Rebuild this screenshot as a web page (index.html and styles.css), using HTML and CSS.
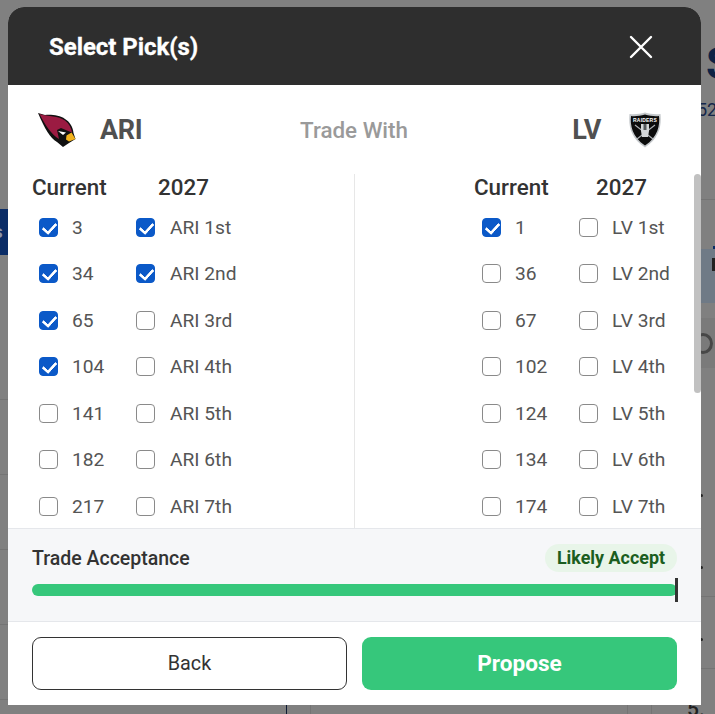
FILE: index.html
```html
<!DOCTYPE html>
<html lang="en">
<head>
<meta charset="utf-8">
<title>Select Pick(s)</title>
<link rel="stylesheet" href="styles.css">
</head>
<body>
<div class="backdrop" aria-hidden="true">
  <div class="bg-blue"><span>s</span></div>
  <i class="hl l1"></i><i class="hl l2"></i><i class="hl l3"></i><i class="hl l4"></i><i class="hl l5"></i>
  <i class="hr r1"></i><i class="hr r2"></i><i class="hr r3"></i>
  <i class="vl v1"></i><i class="vl v2"></i><i class="vl v3"></i><i class="vl v4"></i>
  <span class="bg-s">S</span>
  <span class="bg-52">52</span>
  <i class="bg-row"></i>
  <i class="bg-band"></i>
  <i class="bg-search"></i>
  <i class="bg-tick"></i>
  <i class="bg-glyph"></i>
  <i class="dot d1"></i><i class="dot d2"></i><i class="dot d3"></i>
  <span class="bg-5">5.</span>
</div>

<main class="modal">
  <header class="modal-head">
    <h1>Select Pick(s)</h1>
    <svg class="close" viewBox="0 0 24 24" width="24" height="24"><path d="M2 2 22 22M22 2 2 22" fill="none" stroke="#fff" stroke-width="2.4" stroke-linecap="round"/></svg>
  </header>

  <section class="teams">
    <div class="team">
      <svg class="logo-ari" viewBox="0 0 38 36" width="38" height="36">
        <path d="M0 1 7 3C13 2.500 22 3 27 7 32 10 35 15 35.500 21L37.500 27 31 31 25 35 19 30C12 26 7 17 0 1Z" fill="#111"/>
        <path d="M1.500 2C11 5 20 3.500 27 8.500 31 11.500 33.500 16 34 20.500L29 18.500 23 16 19 18 21 27C14 23 7 13 1.500 2Z" fill="#9b1b42"/>
        <path d="M20 19 28 20.500 25 23Z" fill="#fff"/>
        <path d="M28.500 23.500 33.500 20.500 37.500 27 31 29.500 28 27.500Z" fill="#f2b21c"/>
      </svg>
      <strong>ARI</strong>
    </div>
    <span class="trade-with">Trade With</span>
    <div class="team">
      <strong>LV</strong>
      <svg class="logo-lv" viewBox="0 0 32 36" width="32" height="36">
        <path d="M16 .5C21 2 26 2.500 31.500 2 32.500 13 31 26 16 35.500 1 26-.5 13 .5 2 6 2.500 11 2 16 .5Z" fill="#c4c8cb"/>
        <path d="M16 2.500C21 4 26 4.500 30 4 31 13 29 25 16 33.500 3 25 1 13 2 4 6 4.500 11 4 16 2.500Z" fill="#0c0c0c"/>
        <text x="16" y="9.800" class="logo-text" text-anchor="middle">RAIDERS</text>
        <path d="M6 13 24 27M26 13 8 27" stroke="#a9adb0" stroke-width="1.200" fill="none"/>
        <path d="M12 12H20V19L19 25H13L12 19Z" fill="#d4d6d8"/>
        <path d="M14.500 12H17.500V18H14.500Z" fill="#55595c"/>
      </svg>
    </div>
  </section>

  <section class="picks">
    <div class="side side-left">
      <div class="col">
        <h2>Current</h2>
        <label class="pick"><input type="checkbox" checked><span>3</span></label>
        <label class="pick"><input type="checkbox" checked><span>34</span></label>
        <label class="pick"><input type="checkbox" checked><span>65</span></label>
        <label class="pick"><input type="checkbox" checked><span>104</span></label>
        <label class="pick"><input type="checkbox"><span>141</span></label>
        <label class="pick"><input type="checkbox"><span>182</span></label>
        <label class="pick"><input type="checkbox"><span>217</span></label>
      </div>
      <div class="col">
        <h2>2027</h2>
        <label class="pick"><input type="checkbox" checked><span>ARI 1st</span></label>
        <label class="pick"><input type="checkbox" checked><span>ARI 2nd</span></label>
        <label class="pick"><input type="checkbox"><span>ARI 3rd</span></label>
        <label class="pick"><input type="checkbox"><span>ARI 4th</span></label>
        <label class="pick"><input type="checkbox"><span>ARI 5th</span></label>
        <label class="pick"><input type="checkbox"><span>ARI 6th</span></label>
        <label class="pick"><input type="checkbox"><span>ARI 7th</span></label>
      </div>
    </div>
    <div class="side side-right">
      <div class="col">
        <h2>Current</h2>
        <label class="pick"><input type="checkbox" checked><span>1</span></label>
        <label class="pick"><input type="checkbox"><span>36</span></label>
        <label class="pick"><input type="checkbox"><span>67</span></label>
        <label class="pick"><input type="checkbox"><span>102</span></label>
        <label class="pick"><input type="checkbox"><span>124</span></label>
        <label class="pick"><input type="checkbox"><span>134</span></label>
        <label class="pick"><input type="checkbox"><span>174</span></label>
      </div>
      <div class="col">
        <h2>2027</h2>
        <label class="pick"><input type="checkbox"><span>LV 1st</span></label>
        <label class="pick"><input type="checkbox"><span>LV 2nd</span></label>
        <label class="pick"><input type="checkbox"><span>LV 3rd</span></label>
        <label class="pick"><input type="checkbox"><span>LV 4th</span></label>
        <label class="pick"><input type="checkbox"><span>LV 5th</span></label>
        <label class="pick"><input type="checkbox"><span>LV 6th</span></label>
        <label class="pick"><input type="checkbox"><span>LV 7th</span></label>
      </div>
    </div>
    <div class="thumb"></div>
  </section>

  <section class="acceptance">
    <div class="acc-top">
      <span class="acc-label">Trade Acceptance</span>
      <span class="pill">Likely Accept</span>
    </div>
    <div class="bar"><i class="marker"></i></div>
  </section>

  <footer class="actions">
    <button class="btn btn-back" type="button">Back</button>
    <button class="btn btn-propose" type="button">Propose</button>
  </footer>
</main>
</body>
</html>
```

FILE: styles.css
```css
* { box-sizing: border-box; }
html, body { height: 100%; }
body {
  margin: 0;
  background: #808080;
  overflow: hidden;
  font-family: Roboto, "Liberation Sans", sans-serif;
  position: relative;
}

/* dimmed page behind the dialog */
.backdrop { position: absolute; inset: 0; overflow: hidden; }
.backdrop i, .backdrop span, .backdrop div { position: absolute; display: block; }
.bg-blue { left: 0; top: 209px; width: 8px; height: 46px; background: #0a2c66; }
.bg-blue span { left: -7px; top: 11px; font-size: 19px; font-weight: 700; color: #8a94a8; }
.hl, .hr { height: 1px; background: #747474; }
.hl { left: 0; width: 8px; }
.l1 { top: 399px; } .l2 { top: 474px; } .l3 { top: 549px; } .l4 { top: 624px; } .l5 { top: 699px; }
.hr { left: 701px; width: 14px; }
.r1 { top: 199px; } .r2 { top: 596px; } .r3 { top: 668px; }
.vl { top: 705px; height: 9px; width: 1px; background: #747474; }
.v1 { left: 286px; background: #0d1a33; } .v2 { left: 310px; } .v3 { left: 627px; } .v4 { left: 651px; }
.bg-s { left: 706px; top: 38px; font-size: 44px; font-weight: 700; line-height: 52px; color: #0e2244; }
.bg-52 { left: 697px; top: 99px; font-size: 18px; line-height: 21px; color: #14264a; }
.bg-row { left: 701px; top: 249px; width: 14px; height: 54px; background: #6f7a86; }
.bg-band { left: 701px; top: 318px; width: 14px; height: 50px; background: #7a7a7a; }
.bg-search { left: 693px; top: 333px; width: 20px; height: 21px; border: 3px solid #474747; border-radius: 50%; }
.bg-tick { left: 713px; top: 246px; width: 2px; height: 3px; background: #0a2c66; }
.bg-glyph { left: 712px; top: 258px; width: 3px; height: 13px; background: #222; }
.dot { width: 3px; height: 3px; left: 700px; background: #222; border-radius: 50%; }
.d1 { top: 494px; } .d2 { top: 566px; } .d3 { top: 638px; }
.bg-5 { left: 687px; top: 697px; font-size: 21px; font-weight: 500; color: #222; line-height: 24px; }

/* dialog */
.modal {
  position: relative;
  width: 693px;
  height: 698px;
  margin: 0 0 0 8px;
  top: 7px;
  background: #fff;
  border-radius: 16px 16px 0 0;
  overflow: hidden;
  display: flex;
  flex-direction: column;
}
.modal-head {
  flex: 0 0 78px;
  background: #2e2e2e;
  display: flex;
  align-items: center;
  justify-content: space-between;
  padding: 1px 48px 0 41px;
}
.modal-head h1 {
  margin: 0;
  font-size: 24px;
  font-weight: 700;
  color: #fff;
  letter-spacing: -.05px;
  -webkit-text-stroke: .3px #fff;
}
.close { display: block; }

.teams {
  flex: 0 0 89px;
  display: grid;
  grid-template-columns: 1fr auto 1fr;
  align-items: center;
  padding: 0 40px 0 30px;
}
.team { display: flex; align-items: center; gap: 24px; }
.team strong { font-size: 27px; font-weight: 700; color: #505050; letter-spacing: -.4px; }
.team:last-child { gap: 28px; justify-self: end; }
.trade-with { font-size: 22.400px; font-weight: 500; color: #9a9a9a; margin-left: 9px; }
.logo-ari, .logo-lv { display: block; }
.logo-text { font-family: "Liberation Sans", sans-serif; font-size: 5px; font-weight: 700; fill: #fff; letter-spacing: .2px; }

.picks {
  position: relative;
  flex: 1 1 0;
  min-height: 0;
  overflow: hidden;
  display: grid;
  grid-template-columns: 347px 1fr;
}
.side { display: grid; align-content: start; height: 375px; }
.side-left { grid-template-columns: 104px 1fr; padding-left: 24px; border-right: 1px solid #e7e7e7; }
.side-right { grid-template-columns: 105px 1fr; padding-left: 119px; }
.col { display: flex; flex-direction: column; }
.col h2 {
  margin: 0 0 3px;
  font-size: 22.400px;
  line-height: 27px;
  font-weight: 500;
  color: #333;
}
.col + .col h2 { padding-left: 22px; }
.side-right .col + .col h2 { padding-left: 17px; }

.pick {
  flex: 0 0 46.500px;
  display: flex;
  align-items: center;
  gap: 14px;
  font-size: 19.200px;
  color: #555;
}
.side-left .col + .col .pick { gap: 15px; }
.col:first-child .pick { padding-left: 7px; }
.side-right .col:first-child .pick { padding-left: 8px; }
.pick input {
  appearance: none;
  -webkit-appearance: none;
  position: relative;
  flex: none;
  width: 19px;
  height: 19px;
  margin: 0;
  background: #fff;
  border: 1.500px solid #8a8a8a;
  border-radius: 4px;
}
.pick input:checked { background: #0b59c8; border-color: #0b59c8; }
.pick input:checked::after {
  content: "";
  position: absolute;
  left: 5px;
  top: 1px;
  width: 6px;
  height: 11px;
  border: solid #fff;
  border-width: 0 3px 3px 0;
  border-radius: 1px;
  transform: rotate(42deg);
}
.thumb {
  position: absolute;
  right: 0;
  top: 0;
  width: 7px;
  height: 219px;
  background: #c1c1c1;
  border-radius: 4px;
}

.acceptance {
  flex: 0 0 94px;
  background: #f6f7f9;
  border-top: 1px solid #e5e7eb;
  border-bottom: 1px solid #e5e7eb;
  padding: 15px 24px 0;
}
.acc-top { display: flex; align-items: center; justify-content: space-between; height: 28px; }
.acc-label { font-size: 19.500px; font-weight: 500; color: #333; }
.pill {
  height: 28px;
  padding: 0 12px;
  border-radius: 14px;
  background: #e8f5e9;
  color: #1b5e20;
  font-size: 17.900px;
  font-weight: 700;
  line-height: 28px;
}
.bar { position: relative; height: 12px; margin-top: 12px; background: #36c77b; border-radius: 6px; }
.marker { position: absolute; right: -1px; top: -6px; width: 3px; height: 24px; background: #333; }

.actions {
  flex: 0 0 83px;
  display: grid;
  grid-template-columns: 315px 315px;
  justify-content: space-between;
  padding: 15px 24px 15px;
}
.btn { height: 53px; border-radius: 9px; font-family: inherit; cursor: pointer; }
.btn-back { background: #fff; border: 1px solid #333; color: #333; font-size: 19.800px; font-weight: 400; }
.btn-propose { background: #36c77b; border: 0; color: #fff; font-size: 22.600px; font-weight: 700; padding-bottom: 2px; }
```
